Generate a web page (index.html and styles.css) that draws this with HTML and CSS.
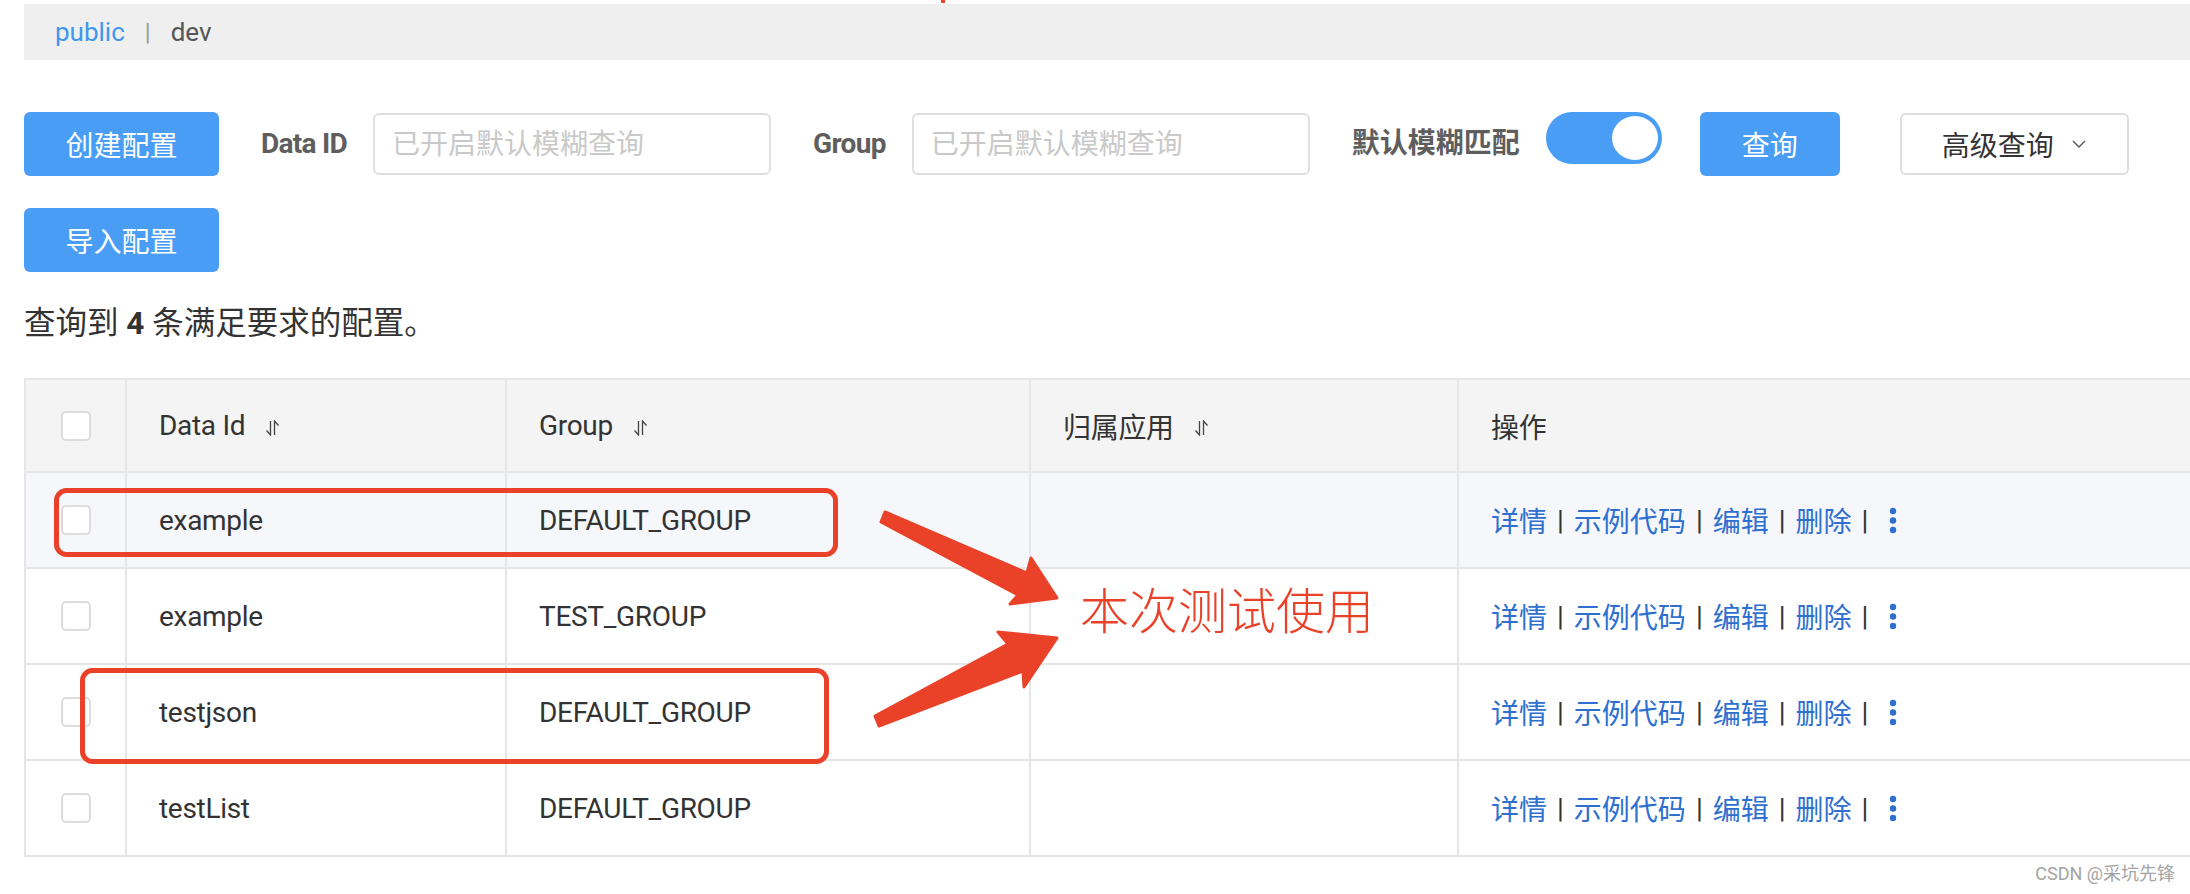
FILE: index.html
```html
<!DOCTYPE html>
<html lang="zh-CN">
<head>
<meta charset="utf-8">
<title>配置列表</title>
<link rel="stylesheet" href="styles.css">
</head>
<body>
<div class="page">
  <div class="crumb"><span class="ns">public</span><span class="sep">|</span><span class="env">dev</span></div>

  <div class="toolbar">
    <button class="btn primary wide">创建配置</button>
    <label class="lbl latin">Data ID</label>
    <input class="search" placeholder="已开启默认模糊查询">
    <label class="lbl latin">Group</label>
    <input class="search" placeholder="已开启默认模糊查询">
    <label class="lbl">默认模糊匹配</label>
    <div class="switch"><span class="knob"></span></div>
    <button class="btn primary query">查询</button>
    <button class="btn adv">高级查询<svg class="chev" width="14" height="8" viewBox="0 0 14 8"><path d="M1 1 L7 7 L13 1" fill="none" stroke="#555" stroke-width="1.4"/></svg></button>
  </div>

  <div class="toolbar2">
    <button class="btn primary wide">导入配置</button>
  </div>

  <p class="summary">查询到 <b>4</b> 条满足要求的配置。</p>

  <div class="table">
    <div class="row head">
      <div class="cell chk"><span class="box"></span></div>
      <div class="cell">Data Id<svg class="sort" width="15" height="16" viewBox="0 0 15 16"><path d="M5.5 1 V15 L1.5 10.5 M9.5 15 V1 L13.5 5.5" fill="none" stroke="#444" stroke-width="1.3"/></svg></div>
      <div class="cell">Group<svg class="sort" width="15" height="16" viewBox="0 0 15 16"><path d="M5.5 1 V15 L1.5 10.5 M9.5 15 V1 L13.5 5.5" fill="none" stroke="#444" stroke-width="1.3"/></svg></div>
      <div class="cell">归属应用<svg class="sort" width="15" height="16" viewBox="0 0 15 16"><path d="M5.5 1 V15 L1.5 10.5 M9.5 15 V1 L13.5 5.5" fill="none" stroke="#444" stroke-width="1.3"/></svg></div>
      <div class="cell">操作</div>
    </div>

    <div class="row hover">
      <div class="cell chk"><span class="box"></span></div>
      <div class="cell">example</div>
      <div class="cell">DEFAULT_GROUP</div>
      <div class="cell"></div>
      <div class="cell ops"><a>详情</a><span class="pipe">|</span><a>示例代码</a><span class="pipe">|</span><a>编辑</a><span class="pipe">|</span><a>删除</a><span class="pipe">|</span><svg class="more" width="30" height="30" viewBox="0 0 30 30"><circle cx="15" cy="6" r="3.2"/><circle cx="15" cy="15.5" r="3.2"/><circle cx="15" cy="25" r="3.2"/></svg></div>
    </div>

    <div class="row">
      <div class="cell chk"><span class="box"></span></div>
      <div class="cell">example</div>
      <div class="cell">TEST_GROUP</div>
      <div class="cell"></div>
      <div class="cell ops"><a>详情</a><span class="pipe">|</span><a>示例代码</a><span class="pipe">|</span><a>编辑</a><span class="pipe">|</span><a>删除</a><span class="pipe">|</span><svg class="more" width="30" height="30" viewBox="0 0 30 30"><circle cx="15" cy="6" r="3.2"/><circle cx="15" cy="15.5" r="3.2"/><circle cx="15" cy="25" r="3.2"/></svg></div>
    </div>

    <div class="row">
      <div class="cell chk"><span class="box"></span></div>
      <div class="cell">testjson</div>
      <div class="cell">DEFAULT_GROUP</div>
      <div class="cell"></div>
      <div class="cell ops"><a>详情</a><span class="pipe">|</span><a>示例代码</a><span class="pipe">|</span><a>编辑</a><span class="pipe">|</span><a>删除</a><span class="pipe">|</span><svg class="more" width="30" height="30" viewBox="0 0 30 30"><circle cx="15" cy="6" r="3.2"/><circle cx="15" cy="15.5" r="3.2"/><circle cx="15" cy="25" r="3.2"/></svg></div>
    </div>

    <div class="row">
      <div class="cell chk"><span class="box"></span></div>
      <div class="cell">testList</div>
      <div class="cell">DEFAULT_GROUP</div>
      <div class="cell"></div>
      <div class="cell ops"><a>详情</a><span class="pipe">|</span><a>示例代码</a><span class="pipe">|</span><a>编辑</a><span class="pipe">|</span><a>删除</a><span class="pipe">|</span><svg class="more" width="30" height="30" viewBox="0 0 30 30"><circle cx="15" cy="6" r="3.2"/><circle cx="15" cy="15.5" r="3.2"/><circle cx="15" cy="25" r="3.2"/></svg></div>
    </div>
  </div>
</div>

<svg class="annot" width="2190" height="894" viewBox="0 0 2190 894">
  <rect x="941" y="0" width="4" height="3" fill="#ea4129"/>
  <rect x="56.5" y="490.5" width="779" height="64" rx="10" fill="none" stroke="#ea4129" stroke-width="5"/>
  <rect x="82.5" y="670.5" width="744" height="91" rx="10" fill="none" stroke="#ea4129" stroke-width="5"/>
  <polygon points="885,512 1027,573 1031,558 1057,598 1010,604 1018,595 881,522" fill="#ea4129" stroke="#ea4129" stroke-width="3" stroke-linejoin="round"/>
  <polygon points="875,716 1008,644 998,632 1057,638 1024,687 1023,671 879,726" fill="#ea4129" stroke="#ea4129" stroke-width="3" stroke-linejoin="round"/>
</svg>
<div class="note">本次测试使用</div>
<div class="watermark">CSDN @采坑先锋</div>
</body>
</html>
```

FILE: styles.css
```css
* { box-sizing: border-box; }

body {
  margin: 0;
  font-family: Roboto, "Noto Sans CJK SC", sans-serif;
  color: #333;
  background: #fff;
  overflow: hidden;
  position: relative;
  width: 2190px;
  height: 894px;
}

.page {
  padding: 4px 0 0 24px;
}

.crumb {
  height: 56px;
  background: #efefef;
  display: flex;
  align-items: center;
  padding-left: 31px;
  font-size: 26px;
}
.ns { color: #3f97ef; }
.sep { color: #9a9a9a; margin: 0 20px 0 20px; font-size: 24px; }
.env { color: #555; }

.toolbar {
  display: flex;
  align-items: flex-start;
  margin-top: 52px;
  height: 64px;
}
.toolbar2 { margin-top: 32px; height: 64px; }

.btn {
  font-family: inherit;
  font-size: 28px;
  border: none;
  border-radius: 6px;
  height: 64px;
  padding: 0;
  cursor: pointer;
}
.primary { background: #4a9df5; color: #fff; }
.wide { width: 195px; }
.query { width: 140px; }
.adv {
  margin-left: 60px;
  margin-top: 1px;
  width: 229px;
  height: 62px;
  background: #fff;
  border: 2px solid #dedede;
  color: #333;
  display: flex;
  align-items: center;
  padding-left: 40px;
}
.chev { margin-left: 18px; }

.lbl {
  font-size: 28px;
  font-weight: 700;
  color: #5e5e5e;
  line-height: 64px;
  margin: 0 26px 0 42px;
}
.lbl.latin { letter-spacing: -0.7px; }

.search {
  width: 398px;
  height: 62px;
  margin-top: 1px;
  border: 2px solid #e0e0e0;
  border-radius: 6px;
  padding: 0 0 0 17px;
  font-family: inherit;
  font-size: 28px;
  outline: none;
}
.search::placeholder { color: #c9c9c9; }

.switch {
  position: relative;
  width: 116px;
  height: 52px;
  border-radius: 26px;
  background: #4a9df5;
  margin-right: 38px;
}
.knob {
  position: absolute;
  right: 4px;
  top: 4px;
  width: 46px;
  height: 44px;
  border-radius: 50%;
  background: #fff;
}

.summary {
  margin: 32px 0 0;
  font-size: 31.5px;
  line-height: 40px;
  color: #333;
}
.summary b { font-weight: 700; }

.table {
  margin-top: 34px;
  width: 2166px;
  border-top: 2px solid #e6e6e6;
}
.row {
  display: grid;
  grid-template-columns: 101px 380px 524px 428px 1fr;
  height: 96px;
  border-bottom: 2px solid #e6e6e6;
}
.row.head { height: 93px; background: #f4f4f4; }
.row.hover { background: #f5f7fa; }

.cell {
  border-left: 2px solid #e6e6e6;
  display: flex;
  align-items: center;
  padding-left: 32px;
  font-size: 28px;
  letter-spacing: -0.3px;
  color: #333;
  white-space: nowrap;
}
.cell.chk { justify-content: center; padding-left: 0; }
.cell.ops { letter-spacing: 0; }
.box {
  width: 30px;
  height: 30px;
  border: 2px solid #dcdcdc;
  border-radius: 5px;
  background: #fff;
}
.sort { margin-left: 20px; margin-top: 4px; }

.ops a { color: #2e6fd0; }
.pipe { color: #333; margin: 0 10px; }
.more { fill: #2e6fd0; }

.annot {
  position: absolute;
  left: 0;
  top: 0;
  pointer-events: none;
}
.note {
  position: absolute;
  left: 1080px;
  top: 583px;
  font-family: "Noto Sans CJK SC", sans-serif;
  font-size: 49px;
  line-height: 49px;
  font-weight: 300;
  color: #ea4129;
}
.watermark {
  position: absolute;
  right: 15px;
  top: 862px;
  font-family: Roboto, "Noto Sans CJK SC", sans-serif;
  font-size: 18px;
  line-height: 24px;
  color: #a3a3a3;
}
```
